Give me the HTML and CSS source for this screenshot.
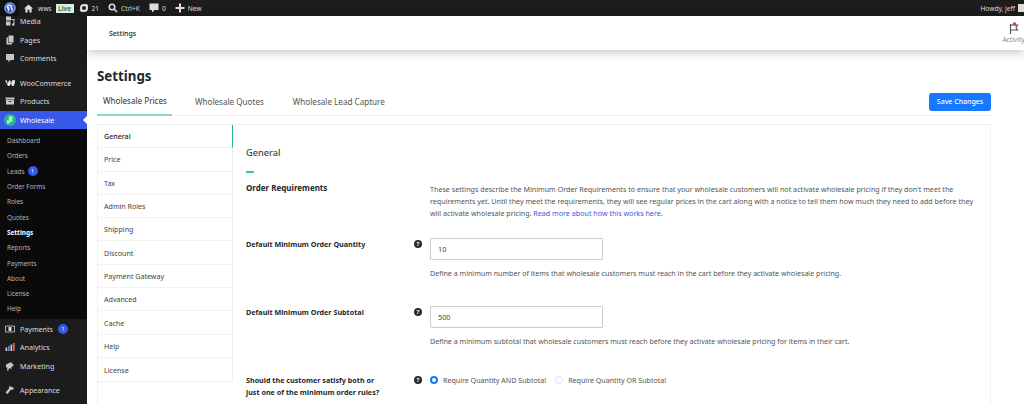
FILE: index.html
```html
<!DOCTYPE html>
<html lang="en">
<head>
    <meta charset="UTF-8">
    <title>Settings - wws</title>
    <link rel="stylesheet" href="styles.css">
</head>
<body>
    <!-- Admin bar -->
    <header class="adminbar">
        <span class="bar-logo">
            <svg width="12" height="12" viewBox="0 0 20 20"><circle cx="10" cy="10" r="10" fill="#3454b4"/><circle cx="10" cy="10" r="8.300" fill="none" stroke="#dfe6f7" stroke-width="1"/><path d="M4 7.500 7.600 16.800l1.800-5.300-1.300-3.500-1-.1v-.8h4.300v.8l-1 .1 3.100 8.900 1-3.200c.4-1.500.3-2.400-.2-3.400-.4-.8-.8-1.300-.8-2 0-.7.500-1.200 1.100-1.300C12.500 3.500 6 3.200 4 7.500z" fill="#dfe6f7"/></svg>
        </span>
        <span class="bar-item bar-home">
            <svg width="9" height="9" viewBox="0 0 20 20"><path d="M10 1 0 10h3v9h5v-6h4v6h5v-9h3z" fill="#ddd"/></svg>
            wws
        </span>
        <span class="live">Live</span>
        <span class="bar-item">
            <svg width="10" height="10" viewBox="0 0 20 20"><circle cx="10" cy="10" r="6" fill="none" stroke="#e4e4e4" stroke-width="4"/><path d="M14 1v7l5-2zM6 19v-7l-5 2z" fill="#e4e4e4"/></svg>
            21
        </span>
        <span class="bar-item">
            <svg width="10" height="10" viewBox="0 0 20 20"><circle cx="8" cy="8" r="5.500" fill="none" stroke="#ddd" stroke-width="3"/><path d="m12 12 6 6" stroke="#ddd" stroke-width="3.500"/></svg>
            Ctrl+K
        </span>
        <span class="bar-item">
            <svg width="10" height="10" viewBox="0 0 20 20"><path d="M1 1h18v13h-8l-5 5v-5H1z" fill="#ddd"/></svg>
            0
        </span>
        <span class="bar-item">
            <svg width="10" height="10" viewBox="0 0 20 20"><path d="M8 1h4v7h7v4h-7v7H8v-7H1V8h7z" fill="#ddd"/></svg>
            New
        </span>
        <span class="bar-user">Howdy, jeff <i class="avatar"></i></span>
    </header>

    <div class="layout">
        <!-- Sidebar -->
        <aside class="sidebar">
            <ul class="menu">
                <li>
                    <svg class="menu-icon" viewBox="0 0 20 20"><path d="M2 1h10v8H2z" fill="#c8c8c8"/><path d="M13 6h6v11a2.500 2.500 0 1 1-2-2.400V8h-4z" fill="#c8c8c8"/><path d="M2 11h9v8H2z" fill="#c8c8c8"/></svg>
                    Media
                </li>
                <li>
                    <svg class="menu-icon" viewBox="0 0 20 20"><path d="M7 1h10v14H7zM3 5h3v11h8v3H3z" fill="#c8c8c8"/></svg>
                    Pages
                </li>
                <li>
                    <svg class="menu-icon" viewBox="0 0 20 20"><path d="M2 2h16v12h-7l-4 5v-5H2z" fill="#c8c8c8"/></svg>
                    Comments
                </li>
                <li class="menu-gap">
                    <svg class="menu-icon" viewBox="0 0 20 14"><path d="M0 2h4l1 7 3-7h3l1 7 2-7q0-1 5-1 1 0 1 3 0 5-3 9h-3l-2-5-3 5H6z" fill="#e8e8e8"/></svg>
                    WooCommerce
                </li>
                <li>
                    <svg class="menu-icon" viewBox="0 0 20 20"><path d="M1 3h18v4H1zM2 8h16v9H2z" fill="#c8c8c8"/><path d="M7 10h6v1.500H7z" fill="#1c1c1c"/></svg>
                    Products
                </li>
                <li class="menu-active">
                    <svg class="menu-icon" viewBox="0 0 20 20"><circle cx="10" cy="10" r="10" fill="#25b989"/><path d="M8 4h6v9H8zM5 11h4v5H5z" fill="#bfeedd"/></svg>
                    Wholesale
                </li>
            </ul>
            <ul class="submenu">
                <li>Dashboard</li>
                <li>Orders</li>
                <li>Leads <span class="count">1</span></li>
                <li>Order Forms</li>
                <li>Roles</li>
                <li>Quotes</li>
                <li class="current">Settings</li>
                <li>Reports</li>
                <li>Payments</li>
                <li>About</li>
                <li>License</li>
                <li>Help</li>
            </ul>
            <ul class="menu">
                <li>
                    <svg class="menu-icon" viewBox="0 0 20 20"><path d="M1 4h18v12H1z" fill="none" stroke="#ddd" stroke-width="1.500"/><path d="M7 6h6v8H7z" fill="#ddd"/></svg>
                    Payments <span class="count">1</span>
                </li>
                <li>
                    <svg class="menu-icon" viewBox="0 0 20 20"><path d="M1 11h3.500v7H1z" fill="#c8c8c8"/><path d="M6 8h3.500v10H6z" fill="#5a7fe0"/><path d="M11 5h3.500v13H11z" fill="#c8c8c8"/><path d="M16 2h3.500v16H16z" fill="#e0604a"/></svg>
                    Analytics
                </li>
                <li>
                    <svg class="menu-icon" viewBox="0 0 20 20"><path d="M2 7l11-5v14L8 14l-1 5H4l1-6H2z" fill="#c8c8c8"/><circle cx="14" cy="8" r="3" fill="#c8c8c8"/></svg>
                    Marketing
                </li>
                <li class="menu-gap">
                    <svg class="menu-icon" viewBox="0 0 20 20"><path d="M9 2l9 4-3 4-3-1-7 9-4-3 7-8z" fill="#c8c8c8"/></svg>
                    Appearance
                </li>
            </ul>
        </aside>

        <div class="content">
            <!-- Top strip -->
            <div class="topbar">
                <span class="topbar-title">Settings</span>
                <div class="activity">
                    <svg width="12" height="13" viewBox="0 0 12 13"><path d="M2.500 2v10M2.500 3h7L8 5.500 9.500 8h-7" fill="none" stroke="#555" stroke-width="1.200"/><circle cx="6.500" cy="2" r="1.700" fill="#d9363e"/></svg>
                    <span>Activity</span>
                </div>
            </div>

            <main class="page">
                <h1 class="page-title">Settings</h1>

                <div class="tabs">
                    <a class="tab tab-active">Wholesale Prices</a>
                    <a class="tab">Wholesale Quotes</a>
                    <a class="tab">Wholesale Lead Capture</a>
                    <button class="save-btn">Save Changes</button>
                </div>

                <div class="panel">
                    <ul class="side-tabs">
                        <li class="side-active">General</li>
                        <li>Price</li>
                        <li>Tax</li>
                        <li>Admin Roles</li>
                        <li>Shipping</li>
                        <li>Discount</li>
                        <li>Payment Gateway</li>
                        <li>Advanced</li>
                        <li>Cache</li>
                        <li>Help</li>
                        <li>License</li>
                    </ul>

                    <section class="form">
                        <h2 class="form-title">General</h2>
                        <div class="dash"></div>

                        <div class="row row-intro">
                            <h3 class="intro-title">Order Requirements</h3>
                            <p class="intro-text">These settings describe the Minimum Order Requirements to ensure that your wholesale customers will not activate wholesale pricing if they don't meet the requirements yet. Until they meet the requirements, they will see regular prices in the cart along with a notice to tell them how much they need to add before they will activate wholesale pricing. <a href="#">Read more about how this works here.</a></p>
                        </div>

                        <div class="row row-qty">
                            <label class="field-label">Default Minimum Order Quantity</label>
                            <span class="help">?</span>
                            <div class="field">
                                <input class="text-input" type="text" value="10">
                                <p class="field-note">Define a minimum number of items that wholesale customers must reach in the cart before they activate wholesale pricing.</p>
                            </div>
                        </div>

                        <div class="row row-sub">
                            <label class="field-label">Default Minimum Order Subtotal</label>
                            <span class="help">?</span>
                            <div class="field">
                                <input class="text-input" type="text" value="500">
                                <p class="field-note">Define a minimum subtotal that wholesale customers must reach before they activate wholesale pricing for items in their cart.</p>
                            </div>
                        </div>

                        <div class="row row-rule">
                            <label class="field-label">Should the customer satisfy both or just one of the minimum order rules?</label>
                            <span class="help">?</span>
                            <div class="radios">
                                <span class="radio radio-on">Require Quantity AND Subtotal</span>
                                <span class="radio">Require Quantity OR Subtotal</span>
                            </div>
                        </div>
                    </section>
                </div>
            </main>
        </div>
    </div>
</body>
</html>
```

FILE: styles.css
```css
* {
    box-sizing: border-box;
}

html, body {
    height: 404px;
    overflow: hidden;
}

body {
    margin: 0;
    background-color: #fff;
    color: #333;
    font-family: "Noto Sans", "Open Sans", sans-serif;
    font-size: 7.100px;
}

ul {
    list-style: none;
    margin: 0;
    padding: 0;
}

/* Admin bar */
.adminbar {
    display: flex;
    align-items: center;
    height: 16px;
    background-color: #1c1c1c;
    color: #ddd;
    font-size: 6.600px;
}

.bar-logo {
    display: flex;
    align-items: center;
    justify-content: center;
    width: 19px;
    height: 16px;
    background-color: #111;
    margin-right: 5px;
}

.bar-item {
    display: flex;
    align-items: center;
    gap: 3px;
    margin-right: 9px;
}

.bar-home {
    gap: 5px;
    margin-right: 4px;
}

.live {
    width: 18px;
    height: 9px;
    margin-right: 5px;
    background-color: #d9efe2;
    color: #1a6b3a;
    font-weight: 600;
    line-height: 9px;
    text-align: center;
}

.bar-user {
    display: flex;
    align-items: center;
    gap: 3px;
    margin-left: auto;
}

.avatar {
    width: 6px;
    height: 8px;
    background-color: #ddd;
}

.layout {
    display: flex;
    height: 388px;
}

/* Sidebar */
.sidebar {
    width: 87px;
    flex-shrink: 0;
    background-color: #1c1c1c;
    color: #dcdcdc;
    overflow: hidden;
    position: relative;
}

.sidebar > .menu:first-child {
    margin-top: -4px;
}

.menu li {
    display: flex;
    align-items: center;
    gap: 5px;
    height: 18.500px;
    padding-left: 5px;
}

.menu .menu-gap {
    margin-top: 6px;
}

.menu-icon {
    width: 10px;
    height: 10px;
    flex-shrink: 0;
}

.menu .menu-active {
    position: relative;
    background-color: #3858e9;
    color: #fff;
    padding-left: 4px;
    gap: 4px;
}

.menu .menu-active .menu-icon {
    width: 12px;
    height: 12px;
}

.menu-active::after {
    content: "";
    position: absolute;
    right: 0;
    top: 5px;
    border: 4px solid transparent;
    border-right-color: #fff;
}

.submenu {
    background-color: #0a0a0a;
    padding: 4px 0 2px 7px;
    color: #b5b5b5;
    font-size: 6.400px;
    margin-bottom: 1px;
}

.submenu li {
    display: flex;
    align-items: center;
    gap: 3px;
    height: 15.300px;
}

.submenu .current {
    color: #fff;
    font-weight: 700;
}

.count {
    display: inline-flex;
    align-items: center;
    justify-content: center;
    width: 10px;
    height: 10px;
    border-radius: 50%;
    background-color: #3858e9;
    color: #fff;
    font-size: 6px;
}

/* Content */
.content {
    flex: 1;
    min-width: 0;
}

.topbar {
    display: flex;
    align-items: center;
    justify-content: space-between;
    height: 34px;
    padding-left: 22px;
    background-color: #fff;
    box-shadow: 0 2px 10px rgba(0, 0, 0, 0.25);
    position: relative;
}

.topbar-title {
    font-size: 7px;
    font-weight: 500;
    color: #222;
}

.activity {
    display: flex;
    flex-direction: column;
    align-items: center;
    width: 21px;
    color: #888;
    font-size: 6.600px;
    white-space: nowrap;
}

.page {
    padding: 0 33px 0 10px;
}

.page-title {
    margin: 16px 0 0;
    font-size: 13.300px;
    line-height: 20px;
    font-weight: 700;
    color: #23282d;
}

.tabs {
    display: flex;
    align-items: center;
    height: 30px;
    border-bottom: 1px solid #eee;
    font-size: 8.100px;
    color: #555;
}

.tab {
    display: flex;
    align-items: center;
    height: 30px;
    margin-top: 1px;
    margin-right: 29px;
    white-space: nowrap;
}

.tab-active {
    width: 75px;
    margin-right: 23px;
    padding-left: 6px;
    color: #333;
    border-bottom: 2px solid #8ad9bd;
}

.save-btn {
    margin-left: auto;
    margin-top: 2px;
    width: 62px;
    height: 18px;
    padding: 0;
    border: none;
    border-radius: 3px;
    background-color: #1677ff;
    color: #fff;
    font-family: inherit;
    font-size: 7px;
    font-weight: 500;
}

.panel {
    display: flex;
    margin-top: 8px;
    border: 1px solid #f0f0f0;
    border-bottom: none;
    min-height: 280px;
}

.side-tabs {
    width: 135px;
    flex-shrink: 0;
    align-self: flex-start;
    border-right: 1px solid #eee;
    border-bottom: 1px solid #eee;
    color: #444;
}

.side-tabs li {
    display: flex;
    align-items: center;
    height: 23.300px;
    padding-left: 6px;
    border-bottom: 1px solid #f2f2f2;
}

.side-tabs li:last-child {
    border-bottom: none;
}

.side-tabs .side-active {
    color: #222;
    font-weight: 500;
    border-right: 1px solid #25b989;
    margin-right: -1px;
}

.form {
    flex: 1;
    min-width: 0;
    padding: 20px 13px 0 13px;
}

.form-title {
    margin: 0;
    font-size: 9.200px;
    line-height: 16px;
    font-weight: 500;
    color: #444;
}

.dash {
    width: 8px;
    height: 2px;
    margin-top: 10px;
    background-color: #3cbf95;
}

.row {
    display: flex;
    align-items: flex-start;
}

.row-intro {
    margin-top: 8px;
}

.intro-title {
    width: 184px;
    flex-shrink: 0;
    margin: 0;
    font-size: 8px;
    line-height: 14px;
    font-weight: 700;
    color: #23282d;
}

.intro-text {
    margin: 2px 0 0;
    width: 552px;
    font-size: 7.150px;
    line-height: 12px;
    color: #555;
}

.intro-text a {
    color: #3858e9;
    text-decoration: none;
}

.row-qty {
    margin-top: 19px;
}

.row-sub {
    margin-top: 27px;
}

.row-rule {
    margin-top: 27px;
}

.field-label {
    width: 168px;
    flex-shrink: 0;
    padding-right: 32px;
    font-size: 7.200px;
    line-height: 12px;
    font-weight: 700;
    color: #23282d;
}

.help {
    display: flex;
    align-items: center;
    justify-content: center;
    width: 8px;
    height: 8px;
    margin-right: 8px;
    margin-top: 2px;
    border-radius: 50%;
    background-color: #2b2b2b;
    color: #fff;
    font-size: 6px;
    font-weight: 700;
    flex-shrink: 0;
}

.text-input {
    display: block;
    width: 173px;
    height: 22px;
    padding: 0 7px;
    border: 1px solid #ccc;
    border-radius: 1px;
    color: #444;
    font-family: inherit;
    font-size: 7.300px;
    outline: none;
}

.field-note {
    margin: 7px 0 0;
    line-height: 12px;
    color: #555;
    white-space: nowrap;
}

.radios {
    display: flex;
    gap: 9px;
    line-height: 12px;
    color: #555;
}

.radio {
    display: flex;
    align-items: center;
    gap: 5px;
}

.radio::before {
    content: "";
    box-sizing: border-box;
    width: 8px;
    height: 8px;
    border-radius: 50%;
    border: 1px solid #e4e4e4;
    background-color: #fff;
}

.radio-on::before {
    border: 2.500px solid #1677ff;
}
```
